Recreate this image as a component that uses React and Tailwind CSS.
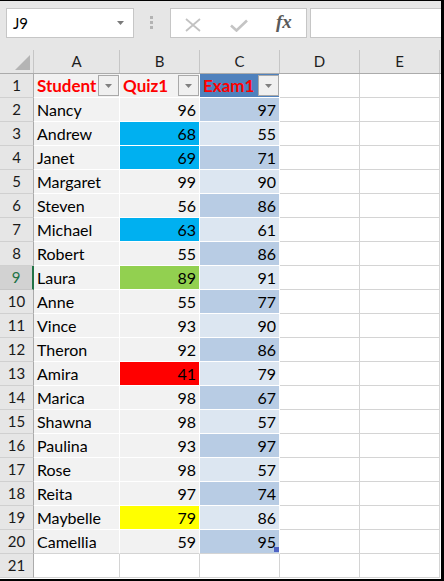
import React from "react";

const rows = [
  ["Nancy", 96, 97, null],
  ["Andrew", 68, 55, "cyan"],
  ["Janet", 69, 71, "cyan"],
  ["Margaret", 99, 90, null],
  ["Steven", 56, 86, null],
  ["Michael", 63, 61, "cyan"],
  ["Robert", 55, 86, null],
  ["Laura", 89, 91, "green"],
  ["Anne", 55, 77, null],
  ["Vince", 93, 90, null],
  ["Theron", 92, 86, null],
  ["Amira", 41, 79, "red"],
  ["Marica", 98, 67, null],
  ["Shawna", 98, 57, null],
  ["Paulina", 93, 97, null],
  ["Rose", 98, 57, null],
  ["Reita", 97, 74, null],
  ["Maybelle", 79, 86, "yellow"],
  ["Camellia", 59, 95, null],
];

const fillCls = {
  cyan: "bg-[#00b0f0]",
  green: "bg-[#92d050]",
  red: "bg-[#ff0000]",
  yellow: "bg-[#ffff00]",
};

function Tri({ color = "#7f7f7f" }) {
  return (
    <svg width="7" height="4" viewBox="0 0 7 4">
      <path d="M0 0H7L3.5 4Z" fill={color} />
    </svg>
  );
}

function FilterBtn() {
  return (
    <div className="w-[21px] h-[21px] mt-[1px] self-start shrink-0 border border-[#a9a9a9] bg-[#f0f0f0] flex items-center justify-center">
      <Tri color="#808080" />
    </div>
  );
}

function RowHead({ n, selected }) {
  return (
    <div
      className={
        selected
          ? "w-[34px] h-[24px] shrink-0 border-b border-b-[#c6c6c6] border-r-2 border-r-[#217346] bg-[#d2d2d2] text-[#217346] flex items-center justify-center text-[15px] leading-[23px]"
          : "w-[34px] h-[24px] shrink-0 border-b border-b-[#d0d0d0] border-r border-r-[#ababab] bg-[#e6e6e6] text-[#1a1a1a] flex items-center justify-center text-[15px] leading-[23px]"
      }
    >
      {n}
    </div>
  );
}

function EmptyCells() {
  return (
    <>
      <div className="w-[80px] h-[24px] shrink-0 border-r border-b border-[#d4d4d4] bg-white" />
      <div className="w-[80px] h-[24px] shrink-0 border-r border-b border-[#d4d4d4] bg-white" />
    </>
  );
}

export default function App() {
  return (
    <div className="w-[444px] h-[581px] overflow-hidden bg-white border-t border-t-black border-r-[3px] border-r-black border-b-2 border-b-black font-['Lato',sans-serif] text-black flex flex-col">
      {/* formula bar */}
      <div className="h-[49px] shrink-0 bg-[#e6e6e6] flex items-start pt-[7px] pl-[6px]">
        <div className="w-[128px] h-[30px] bg-white border border-[#c6c6c6] flex items-center justify-between pl-[6px] pr-[9px] text-[15px]">
          <span>J9</span>
          <Tri color="#7a7a7a" />
        </div>
        <div className="ml-[16px] mt-[8px] flex flex-col gap-[2px]">
          <div className="w-[3px] h-[3px] bg-[#b3b3b3]" />
          <div className="w-[3px] h-[3px] bg-[#b3b3b3]" />
          <div className="w-[3px] h-[3px] bg-[#b3b3b3]" />
        </div>
        <div className="ml-[17px] w-[137px] h-[30px] bg-white border border-[#c6c6c6] flex items-start">
          <svg className="ml-[14px] mt-[9px]" width="16" height="14" viewBox="0 0 16 14">
            <path d="M1 1L15 13M15 1L1 13" stroke="#c2c2c2" strokeWidth="1.8" fill="none" />
          </svg>
          <svg className="ml-[29px] mt-[10px]" width="18" height="13" viewBox="0 0 18 13">
            <path d="M1 6.5L6.5 11.5L17 1.5" stroke="#c4c4c4" strokeWidth="2.6" fill="none" />
          </svg>
          <span className="ml-[28px] mt-[1px] font-['Liberation_Serif',serif] italic font-bold text-[19px] leading-[24px] text-[#5a5a5a]">
            fx
          </span>
        </div>
        <div className="ml-[3px] flex-1 h-[30px] bg-white border-y border-l border-[#c6c6c6]" />
      </div>

      {/* column headers */}
      <div className="flex h-[24px] shrink-0 bg-[#e6e6e6] border-b border-b-[#ababab] text-[15px] leading-[23px] text-[#1e1e1e]">
        <div className="w-[34px] h-[23px] shrink-0 border-r border-r-[#c6c6c6] flex items-end justify-end pr-[3px] pb-[3px]">
          <svg width="15" height="15" viewBox="0 0 15 15">
            <path d="M15 0V15H0Z" fill="#b4b4b4" />
          </svg>
        </div>
        <div className="w-[86px] shrink-0 border-r border-r-[#c6c6c6] text-center">A</div>
        <div className="w-[80px] shrink-0 border-r border-r-[#c6c6c6] text-center">B</div>
        <div className="w-[80px] shrink-0 border-r border-r-[#c6c6c6] text-center">C</div>
        <div className="w-[80px] shrink-0 border-r border-r-[#c6c6c6] text-center">D</div>
        <div className="w-[80px] shrink-0 border-r border-r-[#c6c6c6] text-center">E</div>
      </div>

      {/* row 1 header */}
      <div className="flex h-[24px] shrink-0 text-[17px] leading-[23px]">
        <RowHead n={1} />
        <div className="w-[86px] h-[24px] shrink-0 border-r border-b border-white bg-[#f2f2f2] flex justify-between pl-[3px]">
          <span className="font-bold text-[#ff0000]">Student</span>
          <FilterBtn />
        </div>
        <div className="w-[80px] h-[24px] shrink-0 border-r border-b border-white bg-[#f2f2f2] flex justify-between pl-[3px]">
          <span className="font-bold text-[#ff0000]">Quiz1</span>
          <FilterBtn />
        </div>
        <div className="w-[80px] h-[24px] shrink-0 border-r border-b border-white bg-[#4f81bd] flex justify-between pl-[3px]">
          <span className="font-bold text-[#ff0000]">Exam1</span>
          <FilterBtn />
        </div>
        <EmptyCells />
      </div>

      {rows.map(([name, q, e, fill], i) => {
        const rowNum = i + 2;
        const dark = i % 2 === 0;
        const last = i === rows.length - 1;
        return (
          <div key={name} className="flex h-[24px] shrink-0 text-[16px] leading-[23px]">
            <RowHead n={rowNum} selected={rowNum === 9} />
            <div className={"w-[86px] h-[24px] shrink-0 border-r border-r-white border-b bg-[#f2f2f2] pl-[3px] " + (last ? "border-b-[#d4d4d4]" : "border-b-white")}>
              {name}
            </div>
            <div className={"w-[80px] h-[24px] shrink-0 border-r border-r-white border-b text-right pr-[3px] " + (fill ? fillCls[fill] : "bg-[#f2f2f2]") + " " + (last ? "border-b-[#d4d4d4]" : "border-b-white")}>
              {q}
            </div>
            <div className={"relative w-[80px] h-[24px] shrink-0 border-r border-r-white border-b text-right pr-[3px] " + (dark ? "bg-[#b8cce4]" : "bg-[#dce6f1]") + " " + (last ? "border-b-[#d4d4d4]" : "border-b-white")}>
              {e}
              {last && <div className="absolute right-0 bottom-[1px] w-[5px] h-[5px] bg-[#4f63c4]" />}
            </div>
            <EmptyCells />
          </div>
        );
      })}

      {/* row 21 */}
      <div className="flex h-[24px] shrink-0 text-[16px] leading-[23px]">
        <RowHead n={21} />
        <div className="w-[86px] h-[24px] shrink-0 border-r border-b border-[#d4d4d4] bg-white" />
        <div className="w-[80px] h-[24px] shrink-0 border-r border-b border-[#d4d4d4] bg-white" />
        <div className="w-[80px] h-[24px] shrink-0 border-r border-b border-[#d4d4d4] bg-white" />
        <EmptyCells />
      </div>
    </div>
  );
}
